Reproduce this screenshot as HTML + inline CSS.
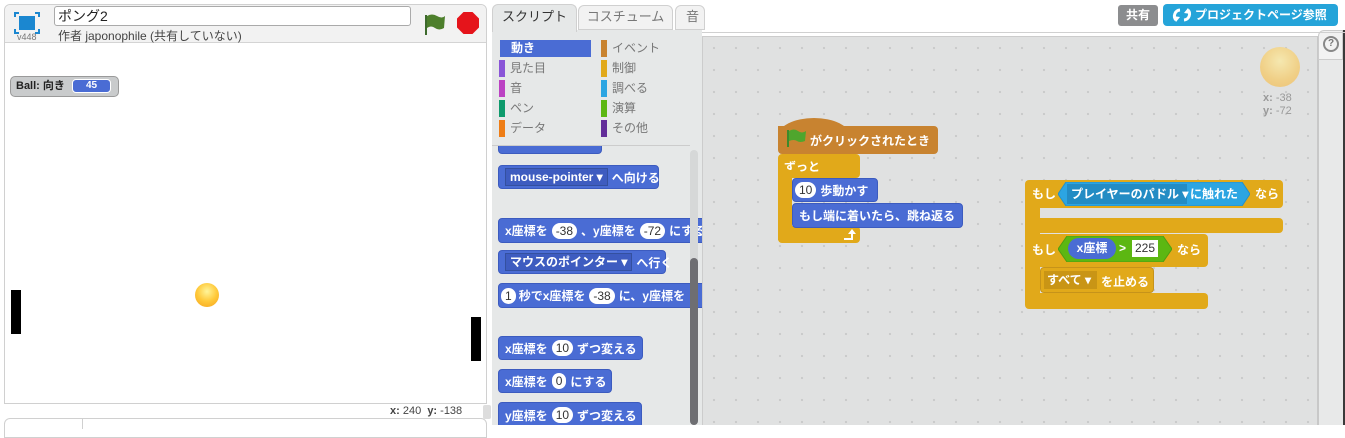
<!DOCTYPE html>
<html><head><meta charset="utf-8">
<style>
*{box-sizing:border-box;margin:0;padding:0}
body{width:1345px;height:425px;overflow:hidden;background:#fff;font-family:"Liberation Sans","Noto Sans CJK JP",sans-serif;position:relative}
.a{position:absolute}
.blk{position:absolute;color:#fff;font-weight:bold;font-size:12px;display:flex;align-items:center;padding-left:6px;white-space:nowrap;border-radius:4px}
.mo{background:#4a6cd4;border:1px solid #3c5bbf}
.ctl{background:#e1a91a}
.num{background:#fff;color:#333;border-radius:9px;padding:0 4px;height:16px;line-height:16px;font-weight:normal;margin:0 4px;font-size:12px}
.dd{background:#3e5cc0;border:1px solid #34509f;padding:0 4px;height:18px;line-height:16px;margin-right:4px}
.cat{position:absolute;font-size:12px;color:#777;height:17px;line-height:17px;padding-left:11px}
.cat i{position:absolute;left:0;top:0;width:6px;height:17px}
.w{color:#fff;font-size:12px;font-weight:bold;white-space:nowrap}
</style></head><body>
<!-- stage panel -->
<div class="a" style="left:4px;top:4px;width:483px;height:400px;border:1px solid #d0d0d0;border-radius:6px 6px 0 0;background:#fff"></div>
<div class="a" style="left:5px;top:5px;width:481px;height:38px;background:#f2f2f2;border-bottom:1px solid #d4d4d4;border-radius:6px 6px 0 0"></div>
<div class="a" style="left:14px;top:12px;width:26px;height:22px;border:2px solid #1b87d0;"></div>
<div class="a" style="left:19px;top:9px;width:16px;height:28px;background:#f2f2f2"></div>
<div class="a" style="left:11px;top:17px;width:32px;height:12px;background:#f2f2f2"></div>
<div class="a" style="left:19px;top:16px;width:16px;height:14px;background:#1b87d0"></div>
<div class="a" style="left:17px;top:32px;font-size:9px;color:#777">v448</div>
<div class="a" style="left:54px;top:6px;width:357px;height:20px;border:1px solid #aaa;border-radius:3px;background:#fff;font-size:14px;padding-left:3px;line-height:18px;color:#222">ポング2</div>
<div class="a" style="left:58px;top:27px;font-size:12px;color:#444">作者 japonophile (共有していない)</div>
<svg class="a" style="left:423px;top:12px" width="24" height="24" viewBox="0 0 24 24"><path d="M3 3 L3 23" stroke="#3d6a2c" stroke-width="2"/><path d="M4 4 Q9 1 14 4 T22 4 L21 16 Q16 19 12 16 T4 16Z" fill="#4d7f2c"/></svg>
<svg class="a" style="left:457px;top:12px" width="22" height="22" viewBox="0 0 22 22"><polygon points="6.5,0 15.5,0 22,6.5 22,15.5 15.5,22 6.5,22 0,15.5 0,6.5" fill="#e5141b"/></svg>
<!-- monitor -->
<div class="a" style="left:10px;top:76px;width:109px;height:21px;background:#c9cbcc;border:1px solid #9a9a9a;border-radius:5px;font-size:11px;font-weight:bold;color:#222;line-height:19px;padding-left:5px">Ball: 向き</div>
<div class="a" style="left:72px;top:79px;width:39px;height:14px;background:#4a6cd4;border:1px solid #fff;border-radius:4px;color:#fff;font-size:10px;font-weight:bold;text-align:center;line-height:12px">45</div>
<div class="a" style="left:195px;top:283px;width:24px;height:24px;border-radius:50%;background:radial-gradient(circle at 50% 35%,#fff59a,#ffc93a 50%,#f5a31c)"></div>
<div class="a" style="left:11px;top:290px;width:10px;height:44px;background:#000"></div>
<div class="a" style="left:471px;top:317px;width:10px;height:44px;background:#000"></div>
<div class="a" style="left:390px;top:405px;font-size:11px;color:#444"><b>x:</b> 240 &nbsp;<b>y:</b> -138</div>
<div class="a" style="left:483px;top:405px;width:8px;height:14px;background:#ddd;border-radius:2px"></div>
<div class="a" style="left:4px;top:418px;width:483px;height:20px;border:1px solid #d0d0d0;border-radius:6px 6px 0 0;background:#fff"></div>
<div class="a" style="left:82px;top:419px;width:1px;height:10px;background:#d0d0d0"></div>
<!-- tabs -->
<div class="a" style="left:492px;top:30px;width:210px;height:395px;background:#e6e8e8"></div>
<div class="a" style="left:492px;top:4px;width:85px;height:28px;background:#e6e8e8;border:1px solid #d0d0d0;border-bottom:none;border-radius:6px 6px 0 0;font-size:13px;color:#333;text-align:center;line-height:24px">スクリプト</div>
<div class="a" style="left:578px;top:5px;width:95px;height:25px;background:#f2f2f2;border:1px solid #d0d0d0;border-radius:6px 6px 0 0;font-size:13px;color:#777;text-align:center;line-height:22px">コスチューム</div>
<div class="a" style="left:675px;top:5px;width:30px;height:25px;background:#f2f2f2;border:1px solid #d0d0d0;border-radius:6px 6px 0 0;font-size:13px;color:#777;padding-left:10px;line-height:22px">音</div>
<div class="a" style="left:500px;top:40px;width:91px;height:17px;background:#4a6cd4;color:#fff;font-weight:bold;font-size:12px;line-height:17px;padding-left:11px">動き</div>
<div class="cat" style="left:499px;top:60px"><i style="background:#8a55d7"></i>見た目</div>
<div class="cat" style="left:499px;top:80px"><i style="background:#bb42c3"></i>音</div>
<div class="cat" style="left:499px;top:100px"><i style="background:#0e9a6c"></i>ペン</div>
<div class="cat" style="left:499px;top:120px"><i style="background:#ee7d16"></i>データ</div>
<div class="cat" style="left:601px;top:40px"><i style="background:#c88330"></i>イベント</div>
<div class="cat" style="left:601px;top:60px"><i style="background:#e1a91a"></i>制御</div>
<div class="cat" style="left:601px;top:80px"><i style="background:#2ca5e2"></i>調べる</div>
<div class="cat" style="left:601px;top:100px"><i style="background:#5cb712"></i>演算</div>
<div class="cat" style="left:601px;top:120px"><i style="background:#632d99"></i>その他</div>
<!-- palette blocks (clipped) -->
<div class="a" style="left:0;top:146px;width:702px;height:279px;overflow:hidden">
<div class="blk mo" style="left:498px;top:-8px;width:104px;height:16px"></div>
<div class="blk mo" style="left:498px;top:19px;width:161px;height:24px"><span class="dd">mouse-pointer ▾</span>へ向ける</div>
<div class="blk mo" style="left:498px;top:72px;width:220px;height:25px">x座標を<span class="num">-38</span>、y座標を<span class="num">-72</span>にする</div>
<div class="blk mo" style="left:498px;top:104px;width:168px;height:24px"><span class="dd">マウスのポインター ▾</span>へ行く</div>
<div class="blk mo" style="left:498px;top:137px;width:240px;height:25px;padding-left:2px"><span class="num" style="margin:0 3px 0 0">1</span>秒でx座標を<span class="num">-38</span>に、y座標を</div>
<div class="blk mo" style="left:498px;top:190px;width:145px;height:24px">x座標を<span class="num">10</span>ずつ変える</div>
<div class="blk mo" style="left:498px;top:223px;width:114px;height:24px">x座標を<span class="num">0</span>にする</div>
<div class="blk mo" style="left:498px;top:256px;width:144px;height:26px">y座標を<span class="num">10</span>ずつ変える</div>
</div>
<div class="a" style="left:492px;top:145px;width:198px;height:1px;background:#ccc"></div>
<div class="a" style="left:690px;top:150px;width:8px;height:275px;background:#d6d8d8;border-radius:4px"></div>
<div class="a" style="left:690px;top:258px;width:8px;height:167px;background:#6e6e72;border-radius:4px"></div>
<!-- script area -->
<div class="a" style="left:702px;top:36px;width:615px;height:389px;background-color:#e0e1e1;background-image:radial-gradient(circle,#c9caca 1px,transparent 1.3px);background-size:22px 22px;border-left:1px solid #ccc;border-top:1px solid #ccc"></div>
<div class="a" style="left:1317px;top:36px;width:26px;height:389px;background:#e8e9e9;border-left:2px solid #c8c8c8"></div>
<div class="a" style="left:1343px;top:30px;width:2px;height:395px;background:#3a3a3a"></div>
<div class="a" style="left:1318px;top:30px;width:25px;height:30px;background:#f2f2f2;border:1px solid #ccc;border-radius:6px 0 0 0"></div>
<div class="a" style="left:1323px;top:36px;width:16px;height:16px;border:2px solid #888;border-radius:50%;font-size:10px;font-weight:bold;color:#777;text-align:center;line-height:12px">?</div>
<div class="a" style="left:702px;top:32px;width:643px;height:1px;background:#d0d0d0"></div>
<div class="a" style="left:1260px;top:47px;width:40px;height:40px;border-radius:50%;background:radial-gradient(circle at 50% 35%,#f5e8b0,#f0cf86 60%,#ecc378);"></div>
<div class="a" style="left:1263px;top:92px;font-size:11px;color:#999;line-height:13px"><b>x:</b> -38<br><b>y:</b> -72</div>
<!-- buttons -->
<div class="a" style="left:1118px;top:5px;width:40px;height:21px;background:#8c8d8f;border-radius:3px;color:#fff;font-size:12px;font-weight:bold;text-align:center;line-height:21px">共有</div>
<div class="a" style="left:1163px;top:4px;width:175px;height:22px;background:#25a4d9;border-radius:4px;color:#fff;font-size:12px;font-weight:bold;line-height:22px;padding-left:32px">プロジェクトページ参照</div>
<svg class="a" style="left:1170px;top:6px" width="24" height="18" viewBox="0 0 24 18"><path d="M10 4 A6 6 0 0 0 6 14" stroke="#fff" stroke-width="3" fill="none"/><path d="M3 10 L6 16 L10 11Z" fill="#fff"/><path d="M14 14 A6 6 0 0 0 18 4" stroke="#fff" stroke-width="3" fill="none"/><path d="M21 8 L18 2 L14 7Z" fill="#fff"/></svg>
<!-- hat stack -->
<div class="a" style="left:778px;top:118px;width:72px;height:24px;background:#c88330;border-radius:36px 36px 0 0/18px 18px 0 0"></div>
<div class="blk" style="left:778px;top:126px;width:160px;height:28px;background:#c88330;padding-left:32px;border-radius:0 4px 4px 4px">がクリックされたとき</div>
<svg class="a" style="left:785px;top:128px" width="22" height="20" viewBox="0 0 22 20"><path d="M3 2 L3 19" stroke="#3d8a2c" stroke-width="2"/><path d="M4 3 Q9 0 13 3 T21 3 L20 13 Q15 15 12 13 T4 13Z" fill="#4fa62d"/></svg>
<div class="blk ctl" style="left:778px;top:154px;width:82px;height:24px;align-items:flex-start;padding-top:4px">ずっと</div>
<div class="a" style="left:778px;top:170px;width:14px;height:70px;background:#e1a91a"></div>
<div class="a" style="left:778px;top:226px;width:82px;height:17px;background:#e1a91a;border-radius:0 4px 4px 4px"></div>
<svg class="a" style="left:843px;top:229px" width="14" height="12" viewBox="0 0 14 12"><path d="M1 10 H9 V4" stroke="#fff" stroke-width="2" fill="none"/><path d="M5 5 L9 0 L13 5Z" fill="#fff"/></svg>
<div class="blk mo" style="left:792px;top:178px;width:86px;height:24px;padding-left:2px"><span class="num" style="margin:0 4px 0 0">10</span>歩動かす</div>
<div class="blk mo" style="left:792px;top:203px;width:171px;height:25px">もし端に着いたら、跳ね返る</div>
<!-- if stack -->
<div class="a" style="left:1025px;top:180px;width:258px;height:28px;background:#e1a91a;border-radius:4px 4px 4px 0"></div>
<div class="a" style="left:1025px;top:200px;width:15px;height:40px;background:#e1a91a"></div>
<div class="a" style="left:1025px;top:218px;width:258px;height:15px;background:#e1a91a;border-radius:0 4px 4px 4px"></div>
<div class="a w" style="left:1032px;top:185px">もし</div>
<svg class="a" style="left:1058px;top:182px" width="192" height="24"><polygon points="0,12 8,0 184,0 192,12 184,24 8,24" fill="#2ca5e2" stroke="#2590c7"/></svg>
<div class="a w" style="left:1067px;top:184px;width:120px;height:20px;background:#238cc4;line-height:20px;padding-left:4px">プレイヤーのパドル ▾</div>
<div class="a w" style="left:1190px;top:185px">に触れた</div>
<div class="a w" style="left:1255px;top:185px">なら</div>
<div class="a" style="left:1025px;top:234px;width:183px;height:33px;background:#e1a91a;border-radius:4px 4px 4px 0"></div>
<div class="a" style="left:1025px;top:260px;width:15px;height:40px;background:#e1a91a"></div>
<div class="a" style="left:1025px;top:293px;width:183px;height:16px;background:#e1a91a;border-radius:0 4px 4px 4px"></div>
<div class="a w" style="left:1032px;top:241px">もし</div>
<svg class="a" style="left:1058px;top:236px" width="114" height="26"><polygon points="0,13 9,0 105,0 114,13 105,26 9,26" fill="#5cb712" stroke="#4e9e10"/></svg>
<div class="a w" style="left:1068px;top:238px;width:48px;height:21px;background:#4a6cd4;border-radius:11px;line-height:21px;text-align:center">x座標</div>
<div class="a w" style="left:1119px;top:241px">&gt;</div>
<div class="a" style="left:1132px;top:240px;width:26px;height:17px;background:#fff;color:#333;font-size:12px;line-height:17px;text-align:center">225</div>
<div class="a w" style="left:1177px;top:241px">なら</div>
<div class="a" style="left:1040px;top:267px;width:114px;height:26px;background:#e1a91a;border:1px solid #c6931a;border-radius:4px"></div>
<div class="a w" style="left:1044px;top:271px;width:53px;height:18px;background:#c99515;line-height:18px;padding-left:3px">すべて ▾</div>
<div class="a w" style="left:1101px;top:273px">を止める</div>
</body></html>
